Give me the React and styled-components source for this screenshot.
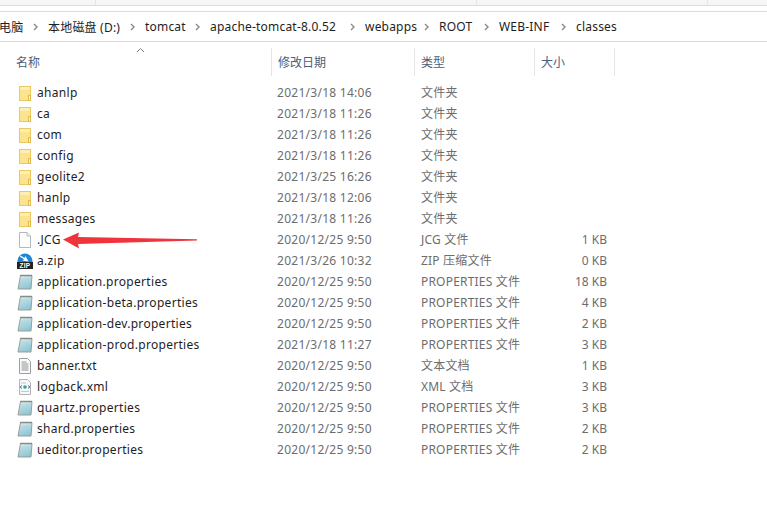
import React from 'react';
import styled, { createGlobalStyle } from 'styled-components';

const GlobalStyle = createGlobalStyle`
  html, body {
    margin: 0;
    padding: 0;
    background: #fff;
    overflow: hidden;
  }
  body {
    font-family: "Noto Sans", "Noto Sans CJK SC", sans-serif;
    font-size: 12px;
  }
`;

const crumbs = [
  { label: '本地磁盘 (D:)', width: 97 },
  { label: 'tomcat', width: 65 },
  { label: 'apache-tomcat-8.0.52', width: 155 },
  { label: 'webapps', width: 74 },
  { label: 'ROOT', width: 60 },
  { label: 'WEB-INF', width: 77 },
  { label: 'classes', width: 60 },
];

const files = [
  { name: 'ahanlp', date: '2021/3/18 14:06', type: '文件夹', icon: 'folder' },
  { name: 'ca', date: '2021/3/18 11:26', type: '文件夹', icon: 'folder' },
  { name: 'com', date: '2021/3/18 11:26', type: '文件夹', icon: 'folder' },
  { name: 'config', date: '2021/3/18 11:26', type: '文件夹', icon: 'folder' },
  { name: 'geolite2', date: '2021/3/25 16:26', type: '文件夹', icon: 'folder' },
  { name: 'hanlp', date: '2021/3/18 12:06', type: '文件夹', icon: 'folder' },
  { name: 'messages', date: '2021/3/18 11:26', type: '文件夹', icon: 'folder' },
  { name: '.JCG', date: '2020/12/25 9:50', type: 'JCG 文件', size: '1 KB', icon: 'blank' },
  { name: 'a.zip', date: '2021/3/26 10:32', type: 'ZIP 压缩文件', size: '0 KB', icon: 'zip' },
  { name: 'application.properties', date: '2020/12/25 9:50', type: 'PROPERTIES 文件', size: '18 KB', icon: 'props' },
  { name: 'application-beta.properties', date: '2020/12/25 9:50', type: 'PROPERTIES 文件', size: '4 KB', icon: 'props' },
  { name: 'application-dev.properties', date: '2020/12/25 9:50', type: 'PROPERTIES 文件', size: '2 KB', icon: 'props' },
  { name: 'application-prod.properties', date: '2021/3/18 11:27', type: 'PROPERTIES 文件', size: '3 KB', icon: 'props' },
  { name: 'banner.txt', date: '2020/12/25 9:50', type: '文本文档', size: '1 KB', icon: 'text' },
  { name: 'logback.xml', date: '2020/12/25 9:50', type: 'XML 文档', size: '3 KB', icon: 'xml' },
  { name: 'quartz.properties', date: '2020/12/25 9:50', type: 'PROPERTIES 文件', size: '3 KB', icon: 'props' },
  { name: 'shard.properties', date: '2020/12/25 9:50', type: 'PROPERTIES 文件', size: '2 KB', icon: 'props' },
  { name: 'ueditor.properties', date: '2020/12/25 9:50', type: 'PROPERTIES 文件', size: '2 KB', icon: 'props' },
];

const Page = styled.div`
  position: relative;
  width: 767px;
  height: 516px;
  background: #fff;
  overflow: hidden;
`;

const TopStrip = styled.div`
  display: flex;
  height: 5px;
  background: #f5f6f7;
  border-bottom: 1px solid #dcdcdc;
`;

const StripCell = styled.div`
  width: ${({ w }) => w}px;
  flex: none;
  border-right: 1px solid #e6e6e6;
`;

const AddressBar = styled.div`
  display: flex;
  align-items: center;
  height: 29px;
  margin-top: 5px;
  border-top: 1px solid #dcdcdc;
  border-bottom: 1px solid #d9d9d9;
  color: #1e1e1e;
  font-size: 12px;
  letter-spacing: 0.2px;
  white-space: nowrap;
`;

const Crumb = styled.span`
  width: ${({ w }) => w}px;
  flex: none;
  display: flex;
  align-items: center;
  justify-content: space-between;
  padding-right: 10px;
  box-sizing: border-box;
  &:first-child {
    margin-left: -1px;
  }
`;

const Chevron = styled.svg`
  width: 5px;
  height: 8px;
  flex: none;
`;

const ColumnHeader = styled.div`
  display: grid;
  grid-template-columns: 271px 144px 120px 80px;
  height: 28px;
  margin-top: 6px;
  color: #4c607a;
  font-size: 12px;
  position: relative;
`;

const HeadCell = styled.div`
  display: flex;
  align-items: center;
  padding-left: ${({ pad }) => pad}px;
  border-right: 1px solid #e5e5e5;
  &:first-child {
    border-right: none;
    box-shadow: 1px 0 0 #e5e5e5;
  }
`;

const SortCaret = styled.svg`
  position: absolute;
  left: 136px;
  top: -1px;
  width: 9px;
  height: 6px;
`;

const List = styled.div`
  margin-top: 6px;
`;

const Row = styled.div`
  display: grid;
  grid-template-columns: 277px 144px 130px 56px;
  height: 21px;
  align-items: center;
  color: #6d6d6d;
  font-size: 12px;
  letter-spacing: 0.27px;
  white-space: nowrap;
`;

const NameCell = styled.div`
  display: flex;
  align-items: center;
  padding-left: 17px;
  color: #1e1e1e;
  letter-spacing: 0.3px;
`;

const IconSlot = styled.span`
  width: 16px;
  height: 16px;
  flex: none;
  margin-right: 4px;
  display: block;
  svg {
    display: block;
  }
`;

const TypeCell = styled.div`
  padding-bottom: 2px;
  letter-spacing: 0.2px;
`;

const SizeCell = styled.div`
  text-align: right;
  letter-spacing: 0;
`;

const ArrowOverlay = styled.svg`
  position: absolute;
  left: 62px;
  top: 232px;
  width: 136px;
  height: 17px;
`;

const FolderIcon = () => (
  <svg width="16" height="16" viewBox="0 0 16 16">
    <rect x="2.500" y="1.500" width="11" height="14" fill="#fce48f" stroke="#ecc862" />
    <rect x="3" y="2" width="10" height="3" fill="#fdeeb4" />
    <rect x="11.500" y="10.500" width="2" height="5" fill="#fff3c4" stroke="#e2b94e" />
  </svg>
);

const BlankIcon = () => (
  <svg width="16" height="16" viewBox="0 0 16 16">
    <path d="M2.500 0.500h7.500l3.500 3.500v11.500h-11z" fill="#fff" stroke="#b4b8bc" />
    <path d="M10 .5v3.500h3.500" fill="#eef0f2" stroke="#b4b8bc" />
  </svg>
);

const ZipIcon = () => (
  <svg width="16" height="16" viewBox="0 0 16 16">
    <path d="M0.500 8a7.500 7.500 0 0 1 15 0v1h-15z" fill="#1b87d8" />
    <path d="M3.500 2.500l4 2.500 1-2 3 5.500-6-1 1.500-1.300-4-2.500z" fill="#fff" />
    <rect x="0" y="9" width="16" height="7" fill="#222" />
    <text x="8" y="15" textAnchor="middle" fontSize="6.500" fontWeight="700" fill="#fff" fontFamily="Liberation Sans, sans-serif">ZIP</text>
  </svg>
);

const PropsIcon = () => (
  <svg width="16" height="16" viewBox="0 0 16 16">
    <defs>
      <linearGradient id="propsFill" x1="0" y1="0" x2="0.400" y2="1">
        <stop offset="0" stopColor="#e2f0f2" />
        <stop offset="1" stopColor="#8cc6d3" />
      </linearGradient>
    </defs>
    <path d="M3.500 1.500h11.500l-1 13.500h-13z" fill="url(#propsFill)" stroke="#9a9f9a" />
    <path d="M4 .500v2M6 .500v2M8 .500v2M10 .500v2M12 .500v2M14 .500v2" stroke="#6b6f6d" strokeWidth="0.800" />
    <path d="M3.200 5h9.500M3 7h9.500M2.800 9h9.500M2.600 11h9.500M2.400 13h9.500" stroke="#a3cdd8" strokeWidth="0.600" />
  </svg>
);

const TextIcon = () => (
  <svg width="16" height="16" viewBox="0 0 16 16">
    <path d="M2.500 .5h8l3 3v12h-11z" fill="#fafafa" stroke="#9a9ea3" />
    <path d="M4.500 4h5M4.500 6h7M4.500 8h7M4.500 10h7M4.500 12h7" stroke="#8d9196" />
  </svg>
);

const XmlIcon = () => (
  <svg width="16" height="16" viewBox="0 0 16 16">
    <path d="M2.500 .5h8l3 3v12h-11z" fill="#f6f7f9" stroke="#b0b4b9" />
    <path d="M4 4h5M4 12.500h8" stroke="#c4c8cc" />
    <circle cx="8" cy="8" r="1.800" fill="#2fa58c" />
    <path d="M5 6.500l-2 1.500 2 1.500M11 6.500l2 1.500-2 1.500" fill="none" stroke="#4f73ad" />
  </svg>
);

const icons = {
  folder: FolderIcon,
  blank: BlankIcon,
  zip: ZipIcon,
  props: PropsIcon,
  text: TextIcon,
  xml: XmlIcon,
};

const ChevronMark = () => (
  <Chevron viewBox="0 0 5 8">
    <path d="M1 1l3 3-3 3" fill="none" stroke="#8a8a8a" strokeWidth="1.400" />
  </Chevron>
);

const App = () => (
  <Page>
    <GlobalStyle />
    <TopStrip>
      <StripCell w={95} />
      <StripCell w={380} />
      <StripCell w={230} />
    </TopStrip>
    <AddressBar>
      <Crumb w={49}>电脑<ChevronMark /></Crumb>
      {crumbs.map((crumb, i) => (
        <Crumb key={crumb.label} w={crumb.width}>
          {crumb.label}
          {i < crumbs.length - 1 && <ChevronMark />}
        </Crumb>
      ))}
    </AddressBar>
    <ColumnHeader>
      <HeadCell pad={16}>名称</HeadCell>
      <HeadCell pad={7}>修改日期</HeadCell>
      <HeadCell pad={6}>类型</HeadCell>
      <HeadCell pad={6}>大小</HeadCell>
      <SortCaret viewBox="0 0 9 6">
        <path d="M1 5l3.500-3.500L8 5" fill="none" stroke="#7a7a7a" />
      </SortCaret>
    </ColumnHeader>
    <List>
      {files.map((file) => {
        const Icon = icons[file.icon];
        return (
          <Row key={file.name}>
            <NameCell>
              <IconSlot><Icon /></IconSlot>
              {file.name}
            </NameCell>
            <div>{file.date}</div>
            <TypeCell>{file.type}</TypeCell>
            <SizeCell>{file.size}</SizeCell>
          </Row>
        );
      })}
    </List>
    <ArrowOverlay viewBox="0 0 136 17">
      <path d="M1 7.500 L17 0.500 L16 5 L135 7.300 L135 8.500 L16 12 L17 16.500 Z" fill="#f0343c" />
    </ArrowOverlay>
  </Page>
);

export default App;
